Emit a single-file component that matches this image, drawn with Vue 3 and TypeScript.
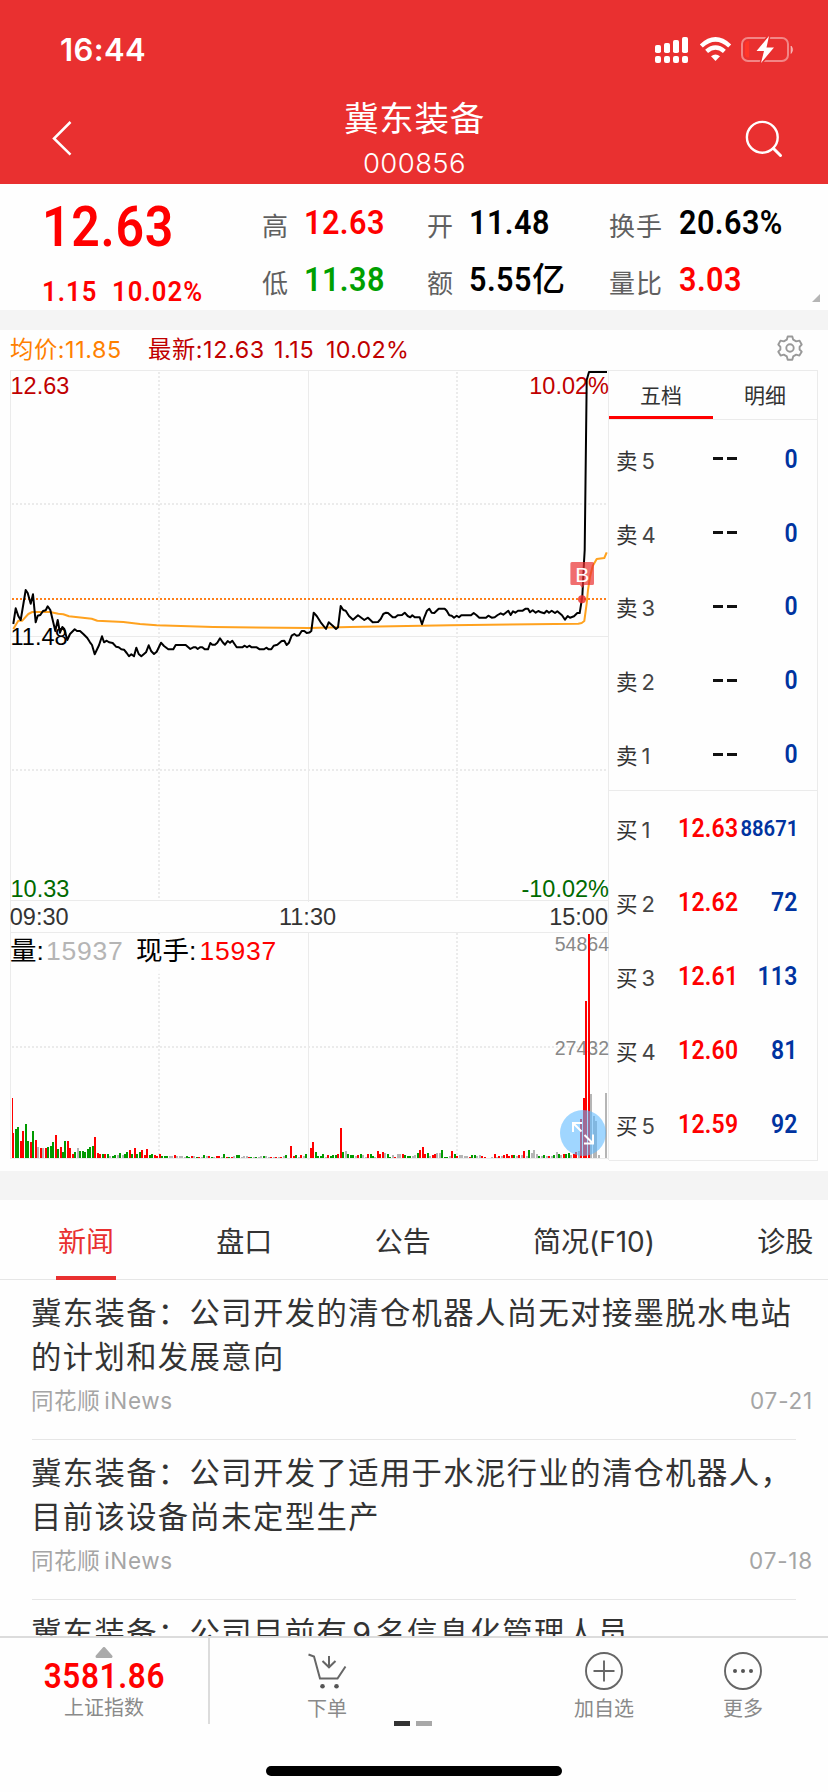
<script setup lang="ts">
interface Bar { x: number; h: number; kind: string }
interface Level { label: string; price: string; volume: string }
interface News { title: string; source?: string; date?: string }
interface Stat { label: string; value: string; unit?: string; tone: string; slot: string }

const stats: Stat[] = [
  { label: '高', value: '12.63', tone: 'up', slot: 'a' },
  { label: '开', value: '11.48', tone: 'flat', slot: 'b' },
  { label: '换手', value: '20.63%', tone: 'flat', slot: 'c' },
  { label: '低', value: '11.38', tone: 'down', slot: 'a' },
  { label: '额', value: '5.55', unit: '亿', tone: 'flat', slot: 'b' },
  { label: '量比', value: '3.03', tone: 'up', slot: 'c' },
]

const asks: Level[] = ['5', '4', '3', '2', '1'].map((n) => ({ label: n, price: '--', volume: '0' }))
const bids: Level[] = [
  { label: '1', price: '12.63', volume: '88671' },
  { label: '2', price: '12.62', volume: '72' },
  { label: '3', price: '12.61', volume: '113' },
  { label: '4', price: '12.60', volume: '81' },
  { label: '5', price: '12.59', volume: '92' },
]

const tabs = ['新闻', '盘口', '公告', '简况(F10)', '诊股']

const news: News[] = [
  { title: '冀东装备：公司开发的清仓机器人尚无对接墨脱水电站的计划和发展意向', source: '同花顺iNews', date: '07-21' },
  { title: '冀东装备：公司开发了适用于水泥行业的清仓机器人，目前该设备尚未定型生产', source: '同花顺iNews', date: '07-18' },
  { title: '冀东装备：公司目前有9名信息化管理人员' },
]

// Splits mixed text so that Latin runs can carry their own side gaps.
const pieces = (text: string) =>
  text.split(/([A-Za-z0-9]+)/).filter(Boolean).map((t) => ({ t, latin: /^[A-Za-z0-9]/.test(t) }))

const price =
  '13.3,624 15.7,608.3 18.3,616 20.7,620 25.7,590 27.7,593 30.7,603.7 33,594.3 35.7,622.3 37.7,615.7 40.3,615 43,611 45.7,610.3 47.7,606.3 50.3,610 52.7,620 55.3,631 57.7,620 60,632.7 62.3,627 64.3,629 67.3,640 70,634 74.7,629.3 77,631 80,631 83.3,634 87.3,638 90,642.3 92,645 94.7,654.3 99,645.3 102,636.3 104,642.3 106.7,640.7 109,642.3 112.7,643 116,646.7 118.7,647.3 121.3,649.3 124,649.7 126.7,653 129,656.3 131.3,654.3 134,656.3 136.3,647.7 138.7,654 141.3,656.3 144,654 146,652.3 148.7,645.3 151.3,651.3 154,654 156.7,651.7 161,642.7 164,646 168.3,649.3 173.3,649.3 175.7,645 185.7,645 190.3,649 193.3,647.3 195.7,647.3 197.7,649 200,647.3 202.3,647.3 204.7,649.3 208,649.3 210.3,643 212.3,644.7 215,644.7 217.3,642.7 220,638.3 222.7,642.3 225,644.7 227.7,641 230,642.7 232.3,640.7 236.7,647.3 242.3,647.3 244.7,645.7 247,647.3 249.3,645.7 251.7,647.3 256.7,647.3 259.7,649.3 264,649.3 266.3,647.7 268.7,649.3 271.3,649.3 273.7,645.7 277.3,644.7 281.7,641 284.3,640.7 286.7,645 289,642.7 291.7,635.7 294.3,634 296.7,635.7 299,635.3 301.7,631 304.3,631 306.7,633 309.3,632.6 311.3,631 313.7,612.7 316.7,616 320.7,622.3 326,629 328.7,622.3 332.7,625.7 336,629 338,627.3 340.7,606 343.3,610 345.7,610.7 349,616 353,619.7 358,615.3 364.3,620 368,617.7 372.7,622.3 378,622 380.7,619 383.3,614 386,612.7 388,613 392.7,617.3 395.3,617.3 397.7,615.3 402,615 404.7,612.7 407.7,616 410.3,617.3 412.3,615.3 414.7,617.3 419.7,617.3 422,624.3 424.3,617.3 427,610.7 429.3,608.7 431.7,612.7 434.3,613 438.7,608.7 444.7,608.7 446.7,610.7 449.3,615.3 451.7,615.7 454,617.7 456.7,615.7 459,617.3 461.3,615.3 471,615.3 473.7,613 476.3,615 479.3,617.7 486,617.7 488.3,615.7 491.7,617.7 494.7,617.3 497.7,615 500.7,613.3 503.3,614.7 508.3,610.7 510.7,615 513,611.3 515.3,612.7 518,610.7 522.7,610.7 525.7,608.7 528,608.7 530,612.3 532.7,610.3 535.7,612.7 538.3,611 541,612.3 544.3,613.3 546.7,610.7 549,612.7 551.7,610.7 555,613 557.3,611.3 562,615.3 565,619.7 567.7,616 570,617.7 574,616.3 577.3,613 579.7,613 582.3,596.7 584,562 584.7,550 586.7,380 589,372 607,372'

const average =
  '13.3,629 18.3,620.7 22.3,620.7 28.3,614 32.3,612 50,612 58.3,613.7 63.3,614.3 69,616.3 91.7,618.7 97.3,620.7 123.3,622 140,624 156.7,625.3 213.3,627 309.3,628 350,627 450,625.3 578.3,623.7 581.7,623 584.3,621 586.7,603.3 588,590 590,576.7 592.7,566 596.7,559 604.3,558 606.7,552.3'

// Minute volumes, keyed by the minute where each run starts: r = up, g = down, x = unchanged.
const runs: [number, string][] = [
  [0, '25r 29g 31g 17r 27r 34g 17g 16r 27g 18r 11x 10r 10x 10r 11g 12g 16g 23r 9g 11r 6g 17g 17r 10r 4r 6g 10x 7g 7g 6g 9g 11g 12g 21r 5r 4r 4g 4r 4g 2x 2g 3g 3x 5g 3x 4g 6g 8r 4g 10r 4g 6g 8r 3r 9r 3g 4g 3r 2r 4r 2g 2g 2g 2x 2x 3r 2x 2x 2x 1x 2g 1g 2r 2x 1g 1r 1x 3g 2x 2r 1g 1x 2r 2r 1x 4g 1r 1g 1r 2x 3g 3g 1x 2x 2x 1r 1g 1x 1g 1x 2x 2g 2x 1x 1r 1x 1r 1x 1r 2x 3g'],
  [112, '12r 2r 3g 1x 3r 2x 4g'],
  [120, '10r 16r 6g 2g 2g 4g 1x 3r 2g 3g 3g 4r 30r 6g 7x 4g 3g 3g 2x 3r 4g 3x 1x 4r 4g 2g 1x'],
  [147, '7r 4r 6r 5x 4g 1g 3x 1r 4x 4x 4r 3g 2g 2g 2x 3x 5g 8r 11r 4r 5g 2x 3r 4r 5x 5x 8g 1g 1g 2x 7r 4g 2r 3x 3x 2x 2x 1r 3g 3g 2x 3x 2r 1r'],
  [193, '1x 4r 1x 2r 2x 3r 4r 2r 3r 3g 2x 3r 3x 7r 2x 8g 5x 8x 4x 2g 2x 3g 2x 2r 2x 3g'],
  [219, '6x 4g 3x 4r 4g 5g 3x 4r 6r 7x 39r 60r 157r 224r 64x 42x 37x 3x'],
  [239, '65x'],
]
const bars: Bar[] = runs.flatMap(([start, text]) =>
  text.split(' ').map((t, i) => ({
    x: Math.round(12.4 + 2.48 * (start + i)),
    h: parseInt(t, 10),
    kind: t.slice(-1),
  })),
)
</script>

<template>
  <div class="page">
    <header class="header">
      <div class="status">
        <span class="clock">16:44</span>
        <svg class="status-icons" width="144" height="32" viewBox="653 33 144 32">
          <g fill="#fff">
            <rect x="655" y="45" width="6" height="8" rx="1.8" /><rect x="664" y="43" width="6" height="10" rx="1.8" />
            <rect x="673" y="40" width="6" height="13" rx="1.8" /><rect x="682" y="37" width="6" height="16" rx="1.8" />
            <rect x="655" y="56" width="6" height="7" rx="2" /><rect x="664" y="56" width="6" height="7" rx="2" />
            <rect x="673" y="56" width="6" height="7" rx="2" /><rect x="682" y="56" width="6" height="7" rx="2" />
            <path d="M715.5 61 L711 56.2 Q715.5 53 720 56.2Z" />
          </g>
          <g fill="none" stroke="#fff" stroke-width="4.4">
            <path d="M701.3 46 Q715.5 32.7 729.7 46" /><path d="M706.6 51.3 Q715.5 43.6 724.4 51.3" />
          </g>
          <rect x="742" y="38" width="46" height="23" rx="6" fill="none" stroke="#fff" stroke-opacity=".42" stroke-width="2" />
          <path d="M791 46 Q794.2 49.5 791 53.5Z" fill="#fff" fill-opacity=".5" stroke="#fff" stroke-opacity=".4" />
          <path d="M749 41 v16.500 h-1.500 q-2.500 -.5 -2.500 -3 v-10.500 q0 -2.500 2.500 -3Z" fill="#ff3528" />
          <path d="M769 36 L756.500 51 H764 L761 63 L774 47.500 H766.500Z" fill="#fff" stroke="#e93030" stroke-width="3" paint-order="stroke" />
        </svg>
      </div>
      <div class="nav">
        <svg width="24" height="40" viewBox="50 118 24 40"><path d="M70.500 122 L54 138.500 L70.500 154.700" fill="none" stroke="#fff" stroke-width="2.500" /></svg>
        <div class="title">
          <h1>冀东装备</h1>
          <span>000856</span>
        </div>
        <svg width="40" height="40" viewBox="744 119 40 40" fill="none" stroke="#fff" stroke-width="2.400"><circle cx="762.300" cy="137.300" r="15.400" /><path d="M773.500 148.500 L780.500 155.500" stroke-width="3" stroke-linecap="round" /></svg>
      </div>
    </header>

    <section class="quote">
      <div class="last">
        <div class="last-price"><span class="din">12.63</span></div>
        <div class="last-change"><span class="din abs">1.15</span><span class="din">10.02%</span></div>
      </div>
      <div class="stats">
        <div v-for="s in stats" :key="s.label" class="stat" :class="'slot-' + s.slot">
          <label>{{ s.label }}</label>
          <span class="value" :class="s.tone"><span class="din">{{ s.value }}</span><span v-if="s.unit" class="unit">{{ s.unit }}</span></span>
        </div>
      </div>
      <i class="corner"></i>
    </section>

    <section class="market">
      <div class="legend">
        <span class="avg">均价:11.85</span>
        <span class="now">最新:12.63</span>
        <span class="now chg">1.15</span>
        <span class="now pc">10.02%</span>
        <svg class="gear" width="28" height="28" viewBox="0 0 28 28" fill="none" stroke="#999" stroke-width="1.900" stroke-linejoin="round">
          <path d="M11.700 2.500 H16.300 L17.200 5.700 L20.200 7.400 L23.400 6.600 L25.700 10.500 L23.600 12.900 V15.500 L25.700 17.700 L23.400 21.600 L20.200 20.700 L17.200 22.400 L16.300 25.700 H11.700 L10.800 22.400 L7.800 20.700 L4.600 21.600 L2.300 17.700 L4.400 15.500 V12.900 L2.300 10.500 L4.600 6.600 L7.800 7.400 L10.800 5.700Z" />
          <circle cx="14" cy="14" r="3.700" />
        </svg>
      </div>
      <div class="board">
        <svg class="chart" width="609" height="801" viewBox="0 370 609 801">
          <g stroke="#ebebeb" fill="none">
            <path d="M10.500 370.500 V1158.500 M10 370.500 H609 M10 636.500 H609 M10 900.500 H609 M10 932.500 H609 M10 1158.500 H609 M308.500 370 V902 M308.500 932 V1160 M608.500 370 V1160" />
            <path stroke-width="2" stroke-dasharray="2 2" d="M12 504 H608 M12 770 H608 M12 1047 H608 M159 372 V900 M457 372 V900 M159 933 V1158 M457 933 V1158" />
          </g>
          <rect x="11" y="934" width="267" height="40" fill="#fefefe" fill-opacity=".8" />
          <g class="axis">
            <text x="10.500" y="393.500" fill="#c00000">12.63</text>
            <text x="609" y="393.500" fill="#c00000" text-anchor="end">10.02%</text>
            <text x="10.500" y="644.700" fill="#000">11.48</text>
            <text x="10.500" y="897" fill="#006a00">10.33</text>
            <text x="609" y="897" fill="#006a00" text-anchor="end">-10.02%</text>
            <text x="9.800" y="924.700" fill="#333">09:30</text>
            <text x="307.500" y="924.700" fill="#333" text-anchor="middle">11:30</text>
            <text x="608" y="924.700" fill="#333" text-anchor="end">15:00</text>
          </g>
          <g class="vol">
            <text x="10" y="960" fill="#000">量:</text><text x="46" y="960" class="digits" fill="#b5b5b5">15937</text>
            <text x="136" y="960" fill="#000">现手:</text><text x="199.500" y="960" class="digits" fill="#f00">15937</text>
          </g>
          <g class="scale">
            <text x="609" y="950.700" text-anchor="end">54864</text>
            <text x="609" y="1054.700" text-anchor="end">27432</text>
          </g>
          <path d="M12 599 H608" stroke="#ff7f1a" stroke-width="2" stroke-dasharray="2 2" />
          <polyline :points="average" fill="none" stroke="#ffa21f" stroke-width="2" stroke-linejoin="round" />
          <polyline :points="price" fill="none" stroke="#000" stroke-width="2" stroke-linejoin="round" />
          <rect x="12" y="1098" width="1" height="60" fill="#f00" />
          <rect v-for="b in bars" :key="b.x" :x="b.x" :y="1158 - b.h" width="2" :height="b.h" :class="'bar-' + b.kind" />
          <g fill="#e93030" fill-opacity=".7">
            <path d="M572 562 h20.500 a1.500 1.500 0 0 1 1.500 1.500 v20 a1.500 1.500 0 0 1 -1.500 1.500 h-8 l-2.300 3 l-2.300 -3 h-8 a1.500 1.500 0 0 1 -1.500 -1.500 v-20 a1.500 1.500 0 0 1 1.500 -1.500Z" />
            <circle cx="582" cy="599.300" r="4" fill-opacity=".85" />
          </g>
          <text class="mark" x="582.300" y="581.500" text-anchor="middle">B</text>
          <circle cx="583" cy="1133" r="23" fill="#5cb9ff" fill-opacity=".58" />
          <path d="M573 1132 V1123 H582 M573.500 1123.500 L581.500 1131.500 M593 1134.500 V1143.500 H584 M592.500 1143 L584.500 1135" fill="none" stroke="#fff" stroke-width="2" />
        </svg>

        <div class="book">
          <div class="book-tabs"><span class="on">五档</span><span>明细</span></div>
          <div class="levels">
            <div v-for="l in asks" :key="l.label" class="level">
              <span class="name">卖<b>{{ l.label }}</b></span>
              <span class="dashes"><i></i><i></i></span>
              <span class="qty din">{{ l.volume }}</span>
            </div>
          </div>
          <div class="levels bids">
            <div v-for="l in bids" :key="l.label" class="level">
              <span class="name">买<b>{{ l.label }}</b></span>
              <span class="cost din">{{ l.price }}</span>
              <span class="qty din" :class="{ small: l.volume.length > 4 }">{{ l.volume }}</span>
            </div>
          </div>
        </div>
      </div>
    </section>

    <nav class="tabs">
      <span v-for="(t, i) in tabs" :key="t" :class="{ active: i === 0 }">{{ t }}</span>
    </nav>

    <main class="news">
      <article v-for="n in news" :key="n.title">
        <h2><span v-for="(p, i) in pieces(n.title)" :key="i" :class="{ latin: p.latin }">{{ p.t }}</span></h2>
        <div v-if="n.source" class="meta">
          <span><span v-for="(p, i) in pieces(n.source)" :key="i" :class="{ latin: p.latin }">{{ p.t }}</span></span>
          <span class="date">{{ n.date }}</span>
        </div>
      </article>
    </main>

    <footer class="bottom">
      <div class="index">
        <svg width="18" height="11" viewBox="0 0 18 11"><path d="M9 1.500 L16 9.500 H2Z" fill="#aaa" stroke="#aaa" stroke-width="3" stroke-linejoin="round" /></svg>
        <strong><span class="din">3581.86</span></strong>
        <small>上证指数</small>
      </div>
      <div class="action order">
        <svg width="40" height="40" viewBox="304 1651 40 40" fill="none" stroke="#666" stroke-width="2"><path d="M305.500 1654.500 L311 1656.500 L317 1678.500 H334.500 L342.500 1666.500 M326 1656 V1667 M319.500 1661 L326 1667.300 L332.500 1661" /><g fill="#555" stroke="none"><circle cx="319.500" cy="1686.300" r="2.300" /><circle cx="333.500" cy="1686.300" r="2.300" /></g></svg>
        <small>下单</small>
      </div>
      <div class="action add">
        <svg width="40" height="40" viewBox="0 0 40 40" fill="none" stroke="#666" stroke-width="1.900"><circle cx="20" cy="20" r="18" /><path d="M9.500 20 H30.500 M20 9.500 V30.500" /></svg>
        <small>加自选</small>
      </div>
      <div class="action more">
        <svg width="40" height="40" viewBox="0 0 40 40" fill="none" stroke="#666" stroke-width="1.900"><circle cx="20" cy="20" r="18" /><g fill="#555" stroke="none"><circle cx="12" cy="20" r="2" /><circle cx="20" cy="20" r="2" /><circle cx="28" cy="20" r="2" /></g></svg>
        <small>更多</small>
      </div>
      <div class="pager"><i></i><i></i></div>
      <div class="home"></div>
    </footer>
  </div>
</template>

<style>
body { background: #fefefe; }
</style>

<style scoped>
.page {
  position: relative;
  width: 828px;
  height: 1792px;
  overflow: hidden;
  display: flex;
  flex-direction: column;
  background: #fefefe;
  color: #333;
  font-family: Inter, "Noto Sans CJK SC", sans-serif;
}
.page * { box-sizing: border-box; }
h1, h2 { margin: 0; font-weight: 400; }
.din {
  display: inline-block;
  font-family: Roboto, sans-serif;
  font-weight: 600;
  letter-spacing: 0.3px;
  transform: scaleX(0.9);
  transform-origin: left center;
  white-space: nowrap;
}

.header { height: 184px; flex: none; background: #e93030; color: #fff; }
.status { height: 100px; display: flex; justify-content: space-between; padding: 33px 31px 0 60px; }
.clock { font-size: 31px; line-height: 34px; font-weight: 600; letter-spacing: 0.4px; }
.nav { height: 84px; display: flex; justify-content: space-between; padding: 0 44px 0 50px; }
.nav > svg { margin-top: 18px; }
.nav > svg:last-child { margin-top: 19px; }
.title { display: flex; flex-direction: column; align-items: center; margin-left: 11px; padding-top: 1px; }
.title h1 { font-size: 34.500px; line-height: 36px; letter-spacing: 0.8px; }
.title span { font-size: 27.500px; line-height: 30px; margin-top: 11px; font-weight: 350; letter-spacing: 0.4px; }

.quote { position: relative; height: 126px; flex: none; display: flex; }
.last { width: 262px; padding-left: 42px; color: #f00; }
.last-price { height: 84px; line-height: 84px; font-size: 55.500px; }
.last-price .din { letter-spacing: 0.8px; }
.last-change { height: 42px; line-height: 48px; font-size: 28.500px; display: flex; }
.last-change .din { letter-spacing: 1.2px; }
.last-change .abs { width: 70px; }
.stats { display: grid; grid-template-columns: 165px 182px 200px; grid-template-rows: 57px 57px; padding-top: 11px; }
.stat { display: flex; }
.stat label { font-size: 26px; line-height: 57px; color: #606060; width: 42px; letter-spacing: 1px; margin-top: 3px; }
.slot-c label { width: 70px; }
.value { font-size: 34px; line-height: 54px; white-space: nowrap; display: flex; }
.value .din { letter-spacing: 0.5px; }
.unit { font-size: 33px; font-weight: 500; margin-left: -7px; }
.flat { color: #000; }
.up { color: #f00; }
.down { color: #009f00; }
.corner { position: absolute; right: 8px; top: 110px; border-left: 8px solid transparent; border-bottom: 8px solid #b5b5b5; }

.market { height: 890px; flex: none; border-top: 20px solid #f4f4f4; border-bottom: 29px solid #f4f4f4; }
.legend { height: 40px; display: flex; align-items: center; padding: 0 24px 0 10px; font-size: 23.300px; line-height: 40px; letter-spacing: 0.6px; white-space: nowrap; }
.avg { color: #ff8000; width: 138px; flex: none; }
.now { color: #c00000; width: 126px; flex: none; }
.now.chg { width: 52px; }
.now.pc { width: auto; letter-spacing: 0.3px; }
.gear { margin-left: auto; margin-top: -4px; }
.board { display: flex; height: 801px; }
.chart { display: block; flex: none; }
.axis text { font: 23.500px "Liberation Sans", Arial, sans-serif; }
.vol text { font: 26.500px "Liberation Sans", "Noto Sans CJK SC", sans-serif; }
.vol .digits { letter-spacing: 0.75px; }
.scale text { font: 19.500px "Liberation Sans", Arial, sans-serif; fill: #888; }
.mark { font: 21px "Liberation Sans", Arial, sans-serif; fill: #fff; }
.bar-r { fill: #f00; }
.bar-g { fill: #009a00; }
.bar-x { fill: #b5b5b5; }

.book { width: 209px; height: 791px; border: 1px solid #ebebeb; border-left: 0; }
.book-tabs { height: 49px; display: flex; border-bottom: 1px solid #ebebeb; font-size: 21px; }
.book-tabs span { width: 104px; text-align: center; line-height: 49px; height: 48px; }
.book-tabs .on { border-bottom: 3px solid #f00; }
.levels { height: 369.500px; padding-top: 2px; }
.bids { height: 370px; border-top: 1px solid #ebebeb; padding-top: 1px; }
.level { height: 73.800px; display: flex; align-items: center; padding: 0 19px 0 7px; }
.name { width: 62px; flex: none; font-size: 21.500px; margin-top: 1px; }
.name b { font-weight: 400; font-size: 22px; margin-left: 4px; color: #444; }
.dashes { display: flex; gap: 4px; margin-left: 35px; }
.dashes i { width: 10px; height: 3px; background: #111; }
.cost { font-size: 25.500px; color: #f00; width: 56px; flex: none; }
.qty { font-size: 25.500px; color: #0033a0; margin-left: auto; flex: none; transform-origin: right center; }
.qty.small { font-size: 22.500px; letter-spacing: 0; }

.tabs { position: relative; height: 80px; flex: none; border-bottom: 1px solid #e6e6e6; font-size: 28px; line-height: 84px; display: flex; gap: 102.300px; padding-left: 58px; white-space: nowrap; }
.tabs .active { color: #e93030; position: relative; }
.tabs .active::after { content: ""; position: absolute; left: -2px; bottom: -1px; width: 60px; height: 4px; background: #e93030; }

.news { height: 356px; flex: none; overflow: hidden; }
.news article { height: 160px; margin: 0 32px; border-bottom: 1px solid #e6e6e6; padding-top: 11px; }
.news h2 { font-size: 30.300px; letter-spacing: 1.420px; line-height: 44px; height: 88px; width: 790px; margin-left: -1px; white-space: normal; }
h2 .latin { margin: 0 3px 0 4px; }
.meta { display: flex; justify-content: space-between; font-size: 22.500px; line-height: 44px; color: #a5a5a5; margin: 0 -17px 0 -1px; letter-spacing: 0.6px; }
.meta .latin { margin-left: 4px; }
.meta .date { letter-spacing: 0.8px; }

.bottom { position: relative; height: 156px; flex: none; border-top: 2px solid #dcdcdc; background: #fefefe; display: flex; }
.index { width: 210px; height: 86px; flex: none; border-right: 2px solid #dcdcdc; display: flex; flex-direction: column; align-items: center; padding-top: 9px; }
.index svg { display: block; margin-right: 1px; }
.index strong { color: #f00; font-size: 35px; line-height: 34px; }
.index .din { transform-origin: center; letter-spacing: 0.7px; }
.index small, .action small { font-size: 20px; line-height: 26px; color: #8a8a8a; white-space: nowrap; }
.index small { margin-top: 1px; }
.action { display: flex; flex-direction: column; align-items: center; padding-top: 13px; width: 80px; flex: none; }
.action small { margin-top: 5px; }
.order { margin-left: 77px; }
.add { margin-left: 197px; }
.more { margin-left: 59px; }
.pager { position: absolute; left: 394px; top: 83px; display: flex; gap: 6px; }
.pager i { width: 16px; height: 5px; background: #333; }
.pager i + i { background: #a8a8a8; }
.home { position: absolute; left: 266px; top: 128px; width: 296px; height: 10px; border-radius: 5px; background: #000; }
</style>
